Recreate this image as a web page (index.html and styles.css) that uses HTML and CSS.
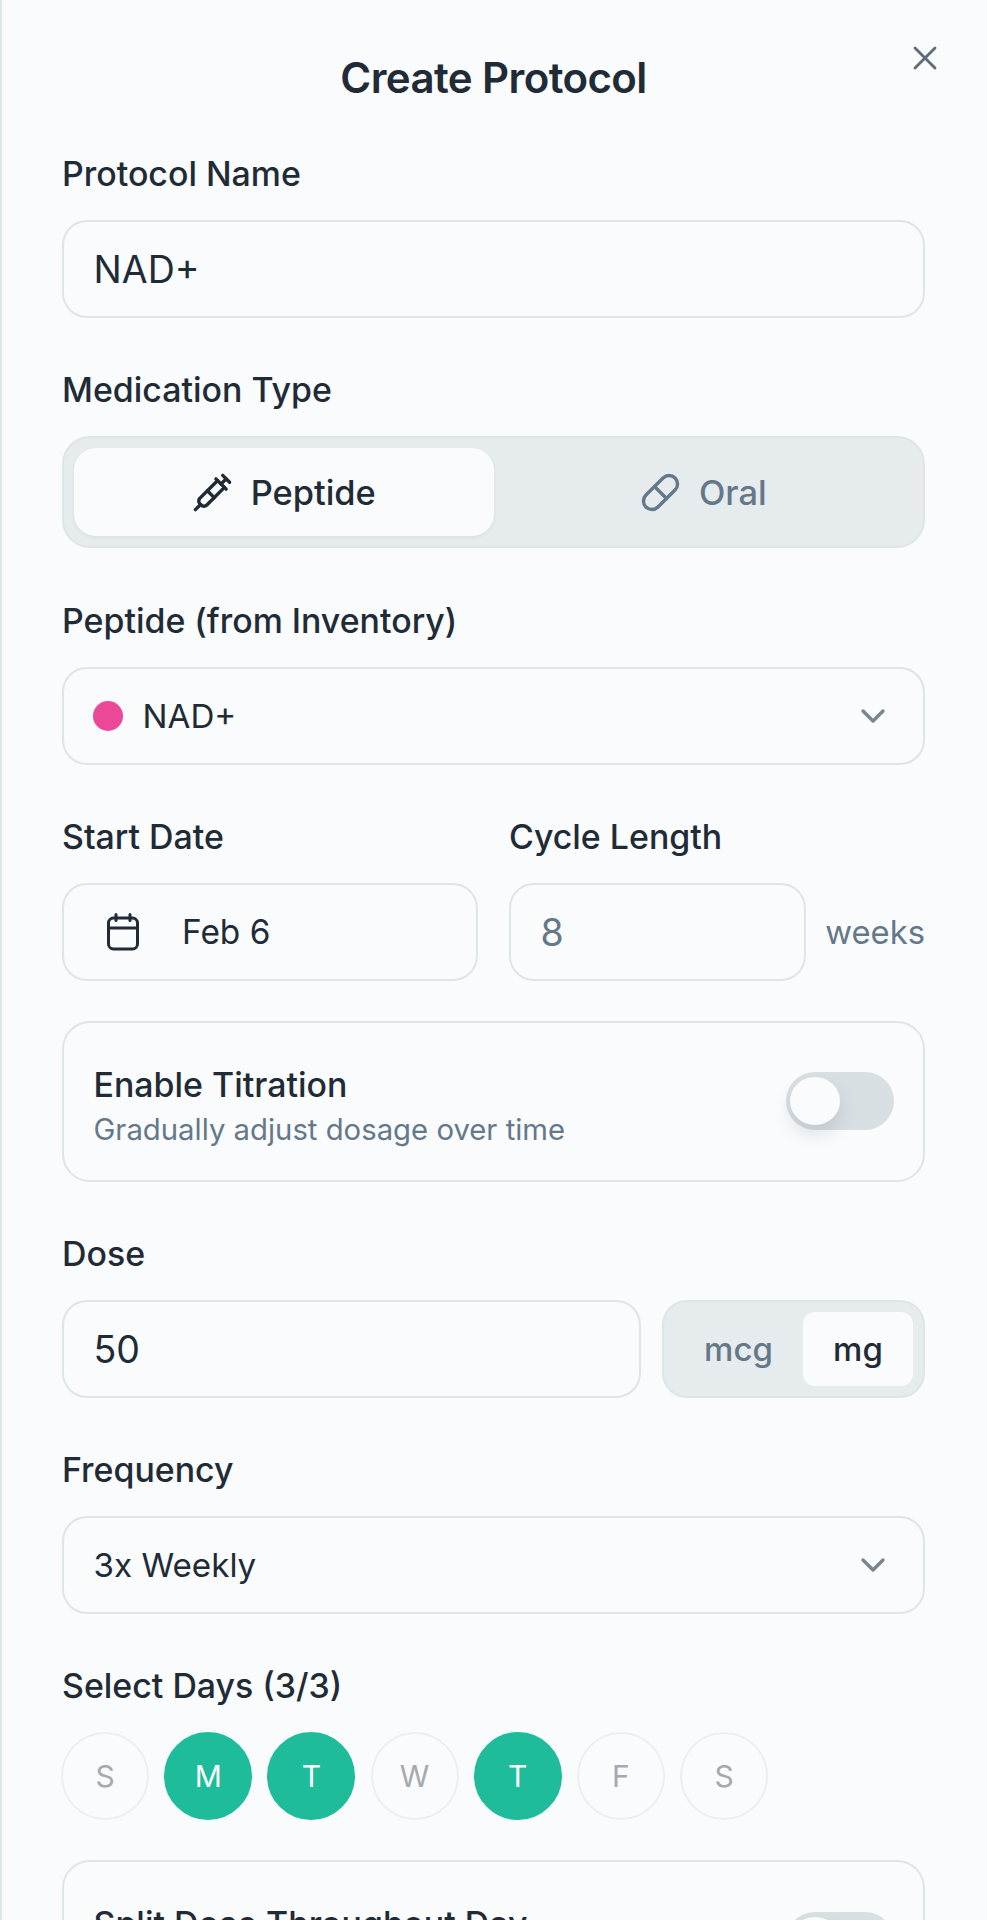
FILE: index.html
```html
<!DOCTYPE html>
<html lang="en">
<head>
<meta charset="utf-8">
<title>Create Protocol</title>
<link rel="stylesheet" href="styles.css">
</head>
<body>
<main class="sheet">
  <button class="close" aria-label="Close">
    <svg class="icon icon-close" viewBox="0 0 24 24"><path d="M18 6 6 18"/><path d="m6 6 12 12"/></svg>
  </button>
  <h1 class="title">Create Protocol</h1>

  <section class="field">
    <label class="label">Protocol Name</label>
    <div class="box">NAD+</div>
  </section>

  <section class="field field-type">
    <label class="label">Medication Type</label>
    <div class="segment">
      <div class="seg-option is-active">
        <svg class="icon icon-seg" viewBox="0 0 24 24"><path d="m18 2 4 4"/><path d="m17 7 3-3"/><path d="M19 9 8.7 19.3c-1 1-2.5 1-3.4 0l-.6-.6c-1-1-1-2.5 0-3.4L15 5"/><path d="m9 11 4 4"/><path d="m5 19-3 3"/><path d="m14 4 6 6"/></svg>
        <span>Peptide</span>
      </div>
      <div class="seg-option">
        <svg class="icon icon-seg" viewBox="0 0 24 24"><path d="m10.5 20.5 10-10a4.95 4.95 0 1 0-7-7l-10 10a4.95 4.95 0 1 0 7 7Z"/><path d="m8.5 8.5 7 7"/></svg>
        <span>Oral</span>
      </div>
    </div>
  </section>

  <section class="field">
    <label class="label">Peptide (from Inventory)</label>
    <div class="box box-select">
      <span class="dot"></span>
      <span class="select-value">NAD+</span>
      <svg class="icon icon-chevron" viewBox="0 0 24 24"><path d="m6 9 6 6 6-6"/></svg>
    </div>
  </section>

  <section class="field field-row">
    <div class="col-date">
      <label class="label">Start Date</label>
      <div class="box box-date">
        <svg class="icon icon-calendar" viewBox="0 0 32 38"><rect x="1.5" y="5" width="29" height="31" rx="5"/><path d="M9 1.5v6"/><path d="M23 1.5v6"/><path d="M1.5 15h29"/></svg>
        <span>Feb 6</span>
      </div>
    </div>
    <div class="col-cycle">
      <label class="label">Cycle Length</label>
      <div class="cycle-row">
        <div class="box box-muted">8</div>
        <span class="suffix">weeks</span>
      </div>
    </div>
  </section>

  <section class="card">
    <div class="card-text">
      <div class="card-title">Enable Titration</div>
      <div class="card-sub">Gradually adjust dosage over time</div>
    </div>
    <div class="toggle"><span class="knob"></span></div>
  </section>

  <section class="field">
    <label class="label">Dose</label>
    <div class="dose-row">
      <div class="box box-dose">50</div>
      <div class="units">
        <span class="unit">mcg</span>
        <span class="unit is-active">mg</span>
      </div>
    </div>
  </section>

  <section class="field">
    <label class="label">Frequency</label>
    <div class="box box-select">
      <span class="select-value">3x Weekly</span>
      <svg class="icon icon-chevron" viewBox="0 0 24 24"><path d="m6 9 6 6 6-6"/></svg>
    </div>
  </section>

  <section class="field field-days">
    <label class="label">Select Days (3/3)</label>
    <div class="days">
      <span class="day">S</span>
      <span class="day is-on">M</span>
      <span class="day is-on">T</span>
      <span class="day">W</span>
      <span class="day is-on">T</span>
      <span class="day">F</span>
      <span class="day">S</span>
    </div>
  </section>

  <section class="card card-split">
    <div class="card-title">Split Dose Throughout Day</div>
    <div class="toggle"><span class="knob"></span></div>
  </section>
</main>
</body>
</html>
```
FILE: styles.css
```css
* { box-sizing: border-box; }

html, body {
  margin: 0;
  height: 1920px;
  overflow: hidden;
  background: #f9fbfd;
}

body {
  font-family: Inter, "Liberation Sans", sans-serif;
  color: #212b36;
}

.sheet {
  position: relative;
  height: 1920px;
  overflow: hidden;
  padding: 54px 62px 0 60px;
  border-left: 2px solid #dde5e9;
}

.title {
  margin: 0 0 52px;
  font-size: 42px;
  line-height: 48px;
  font-weight: 600;
  letter-spacing: -0.6px;
  text-align: center;
}

.close {
  position: absolute;
  top: 38px;
  right: 42px;
  padding: 0;
  border: 0;
  background: none;
  display: flex;
}

.icon {
  fill: none;
  stroke: currentColor;
  stroke-width: 2;
  stroke-linecap: round;
  stroke-linejoin: round;
  flex: none;
}

.icon-close { width: 40px; height: 40px; color: #5f6c77; stroke-width: 1.7; }
.icon-seg { width: 41px; height: 41px; }
.icon-chevron { width: 40px; height: 40px; color: #77858f; margin-left: auto; margin-right: 1px; }
.icon-calendar { width: 32px; height: 38px; stroke-width: 3; }

.field { margin-bottom: 52px; }
.field-type { margin-bottom: 53px; }

.label {
  display: block;
  margin-bottom: 26px;
  font-size: 33.9px;
  line-height: 40px;
  font-weight: 450;
}

.box {
  height: 98px;
  display: flex;
  align-items: center;
  padding: 0 29.5px;
  font-size: 37.5px;
  border: 2.5px solid #dde5e9;
  border-radius: 25px;
}

/* Segmented picker for the medication type */
.segment {
  height: 112px;
  display: flex;
  padding: 10px;
  background: #e6ebee;
  border: 2.5px solid #dde5e9;
  border-radius: 28px;
}

.seg-option {
  flex: 1;
  display: flex;
  align-items: center;
  justify-content: center;
  gap: 18px;
  font-size: 34.4px;
  font-weight: 450;
  color: #64788a;
  border-radius: 22px;
}

.seg-option.is-active {
  color: #212b36;
  background: #f9fbfd;
  box-shadow: 0 2px 4px rgba(33, 43, 54, 0.06);
}

.dot {
  width: 30px;
  height: 30px;
  margin-left: -1px;
  margin-right: 20px;
  border-radius: 50%;
  background: #ec4899;
}

.select-value { font-size: 33.2px; }

/* Start date and cycle length share one row */
.field-row {
  display: flex;
  gap: 31px;
  margin-bottom: 40px;
}

.col-date { width: 416px; }
.col-cycle { flex: 1; }

.box-date {
  gap: 43px;
  padding-left: 43px;
  font-size: 33.4px;
}

.cycle-row {
  display: flex;
  align-items: center;
  gap: 19px;
}

.box-muted {
  flex: 1;
  color: #64788a;
}

.suffix {
  font-size: 32.8px;
  color: #64788a;
}

.card {
  height: 161px;
  display: flex;
  align-items: center;
  justify-content: space-between;
  padding: 0 29.5px;
  margin-bottom: 52px;
  border: 2.5px solid #dde5e9;
  border-radius: 28px;
}

.card-text { margin-top: 10px; }

.card-title {
  font-size: 33.9px;
  line-height: 40px;
  font-weight: 450;
}

.card-sub {
  margin-top: 7px;
  font-size: 29.3px;
  line-height: 36px;
  color: #64788a;
}

.toggle {
  width: 108px;
  height: 58px;
  margin-top: -1px;
  padding: 5px 4px;
  background: #d8dfe3;
  border-radius: 29px;
}

.knob {
  display: block;
  width: 50px;
  height: 48px;
  border-radius: 50%;
  background: #f9fbfd;
  box-shadow: 0 10px 18px rgba(33, 43, 54, 0.12);
}

.dose-row {
  display: flex;
  gap: 21px;
}

.box-dose { flex: 1; }

.units {
  width: 263px;
  height: 98px;
  display: flex;
  padding: 10px;
  font-size: 33px;
  font-weight: 450;
  background: #e6ebee;
  border: 2.5px solid #dde5e9;
  border-radius: 25px;
}

.unit {
  display: flex;
  align-items: center;
  justify-content: center;
  flex: 1;
  color: #64788a;
  border-radius: 12px;
}

.unit.is-active {
  flex: none;
  width: 110px;
  color: #212b36;
  background: #f9fbfd;
}

.field-days { margin-bottom: 40px; }

.days {
  display: flex;
  gap: 15.2px;
  margin-left: -1px;
}

.day {
  width: 88px;
  height: 88px;
  display: flex;
  align-items: center;
  justify-content: center;
  font-size: 30px;
  font-weight: 400;
  color: #a6a9ae;
  border: 2px solid #eceff1;
  border-radius: 50%;
}

.day.is-on {
  color: #fbfdfd;
  background: #1fbc9b;
  border-color: #1fbc9b;
}

/* The split-dose card continues past the visible part of the sheet */
.card-split {
  height: 300px;
  align-items: flex-start;
  padding-top: 42px;
}

.card-split .toggle { margin-top: 8px; }
```
